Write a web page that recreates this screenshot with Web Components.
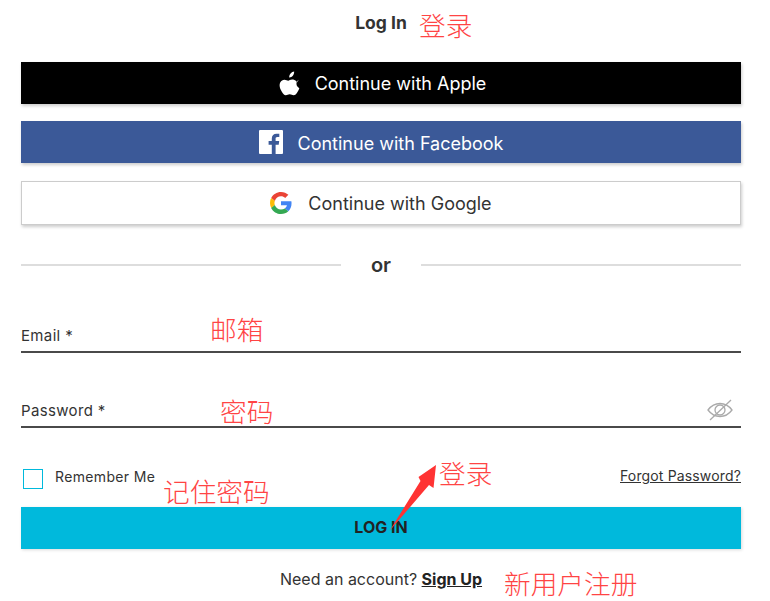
<!DOCTYPE html>
<html lang="en">
<head>
<meta charset="utf-8">
<title>Log In</title>
<style>
  html, body { margin: 0; background: #fff; }
  body { font-family: "Inter", "Liberation Sans", sans-serif; color: #333; }
</style>
</head>
<body>
<login-page>
  <social-button slot="social" kind="apple">Continue with Apple</social-button>
  <social-button slot="social" kind="facebook">Continue with Facebook</social-button>
  <social-button slot="social" kind="google">Continue with Google</social-button>
</login-page>

<script>
const ICONS = {
  apple: `<svg width="21" height="25" viewBox="1.500 0.500 19 22" preserveAspectRatio="none"><path fill="#fff" d="M15.200 1c.1 1.500-.4 2.700-1.200 3.700-.9 1-2 1.600-3.200 1.500-.2-1.300.4-2.600 1.200-3.500C12.900 1.700 14.100 1.100 15.200 1zM19.400 8.300c-1.300.8-2.100 2-2.100 3.500 0 1.700 1 3.100 2.600 3.800-.4 1.200-1 2.400-1.800 3.500-1 1.400-1.900 2.700-3.400 2.700-1.400 0-1.800-.9-3.500-.9-1.600 0-2.200.9-3.500.9-1.400.1-2.500-1.400-3.500-2.800C2.300 16.300 1.300 13 2.700 10.400c.8-1.400 2.200-2.300 3.700-2.300 1.400 0 2.600.9 3.400.9.800 0 2.200-1.100 3.800-1 .7 0 2.900.3 4.300 2.300z"/></svg>`,
  facebook: `<svg width="24" height="24" viewBox="0 0 24 24"><rect width="24" height="24" rx="1" fill="#fff"/><path fill="#3b5998" d="M16.600 24v-9.300h3.100l.5-3.600h-3.600V8.800c0-1 .3-1.800 1.800-1.800h1.900V3.800c-.3 0-1.500-.1-2.800-.1-2.800 0-4.700 1.700-4.700 4.800v2.600H9.600v3.600h3.200V24z"/></svg>`,
  google: `<svg width="22" height="22" viewBox="0 0 48 48"><path fill="#EA4335" d="M24 9.500c3.500 0 6.700 1.200 9.200 3.600l6.900-6.900C35.900 2.400 30.500 0 24 0 14.600 0 6.500 5.400 2.600 13.200l8 6.200C12.400 13.700 17.700 9.500 24 9.500z"/><path fill="#4285F4" d="M47 24.500c0-1.600-.1-3.100-.4-4.500H24v9h12.900c-.6 3-2.200 5.400-4.700 7.100l7.700 6C44.400 37.900 47 31.800 47 24.500z"/><path fill="#FBBC05" d="M10.500 28.600c-.5-1.400-.8-3-.8-4.600s.3-3.200.8-4.600l-8-6.200C.9 16.500 0 20.100 0 24s.9 7.500 2.600 10.800z"/><path fill="#34A853" d="M24 48c6.500 0 11.900-2.100 15.900-5.900l-7.700-6c-2.100 1.400-4.900 2.300-8.200 2.300-6.300 0-11.600-4.200-13.500-9.900l-8 6.200C6.500 42.600 14.600 48 24 48z"/></svg>`
};

class SocialButton extends HTMLElement {
  constructor() {
    super();
    this.attachShadow({ mode: 'open' });
    const kind = this.getAttribute('kind');
    this.shadowRoot.innerHTML = `
      <style>
        :host { display: block; }
        button {
          display: flex;
          align-items: center;
          justify-content: center;
          gap: 15px;
          width: 100%;
          height: 42px;
          padding: 0;
          border: none;
          font: 400 18px "Inter", "Liberation Sans", sans-serif;
          box-shadow: 1px 2px 3px rgba(0,0,0,.2);
        }
        svg { display: block; }
        .apple { background: #000; color: #fff; padding-left: 3px; }
        .facebook { background: #3b5998; color: #fff; }
        .facebook span { padding-top: 2px; }
        .google { background: #fff; color: #333; height: 44px; margin-top: 1px; gap: 16px; border: 1px solid #ccc; }
      </style>
      <button class="${kind}">${ICONS[kind]}<span><slot></slot></span></button>
    `;
  }
}

class TextField extends HTMLElement {
  constructor() {
    super();
    this.attachShadow({ mode: 'open' });
    this.shadowRoot.innerHTML = `
      <style>
        :host {
          display: flex;
          align-items: center;
          justify-content: space-between;
          height: 32px;
          border-bottom: 2px solid #4a4a4a;
          font-size: 15px;
          letter-spacing: .35px;
          color: #333;
        }
        svg { display: block; margin-right: 8px; }
      </style>
      <span><slot></slot></span>
      ${this.hasAttribute('eye') ? `<svg width="26" height="22" viewBox="0 0 26 22" fill="none" stroke="#aaa" stroke-width="1.300">
        <path d="M1 11c3-4 7.500-6.500 12-6.500S22 7 25 11c-3 4-7.500 6.500-12 6.500S4 15 1 11z"/>
        <circle cx="13" cy="11" r="5"/>
        <path d="M24 1 3 21"/></svg>` : ''}
    `;
  }
}

class NoteLabel extends HTMLElement {
  constructor() {
    super();
    this.attachShadow({ mode: 'open' });
    this.shadowRoot.innerHTML = `
      <style>
        :host {
          position: absolute;
          font: 300 26.700px/30px "Noto Sans CJK SC", sans-serif;
          color: #f44;
          white-space: nowrap;
        }
      </style>
      <slot></slot>
    `;
  }
}

class LoginPage extends HTMLElement {
  constructor() {
    super();
    this.attachShadow({ mode: 'open' });
    this.shadowRoot.innerHTML = `
      <style>
        :host {
          display: block;
          position: relative;
          width: 720px;
          height: 601px;
          padding: 0 29px 0 21px;
          overflow: hidden;
          color: #333;
        }
        h1 {
          margin: 0;
          height: 62px;
          padding-top: 13px;
          box-sizing: border-box;
          text-align: center;
          font-size: 17.500px;
          line-height: 20px;
          font-weight: 700;
        }
        .social { display: grid; gap: 17px; }
        .or {
          display: flex;
          align-items: center;
          gap: 30px;
          margin-top: 29px;
          height: 22px;
          font-size: 20px;
          font-weight: 600;
        }
        .or i { flex: 1; height: 1.500px; background: #ddd; }
        .fields { display: grid; gap: 41px; margin-top: 43px; }
        .row {
          display: flex;
          align-items: center;
          justify-content: space-between;
          margin-top: 41px;
          height: 20px;
          font-size: 14px;
          letter-spacing: .35px;
        }
        .remember { display: flex; align-items: center; gap: 12px; margin-left: 2px; }
        .remember span:last-child { padding-bottom: 5px; }
        .box { width: 18px; height: 18px; border: 1px solid #00b9dc; }
        .row a { color: #333; text-decoration: underline; padding-bottom: 8px; letter-spacing: .15px; }
        .login {
          display: block;
          width: 100%;
          height: 42px;
          margin-top: 18px;
          border: none;
          padding: 0 0 2px;
          background: #00b9dc;
          color: #222;
          font: 700 16px "Inter", "Liberation Sans", sans-serif;
          box-shadow: 1px 1px 3px rgba(0,0,0,.15);
        }
        .signup { margin-top: 20px; text-align: center; font-size: 16px; line-height: 20px; }
        .signup a { color: #222; font-weight: 700; text-decoration: underline; }
        .arrow { position: absolute; left: 385px; top: 460px; }
      </style>
      <h1>Log In</h1>
      <div class="social"><slot name="social"></slot></div>
      <div class="or"><i></i><span>or</span><i></i></div>
      <div class="fields">
        <text-field>Email *</text-field>
        <text-field eye>Password *</text-field>
      </div>
      <div class="row">
        <label class="remember"><span class="box"></span><span>Remember Me</span></label>
        <a href="#">Forgot Password?</a>
      </div>
      <button class="login">LOG IN</button>
      <div class="signup">Need an account? <a href="#">Sign Up</a></div>

      <note-label style="left:419px;top:10px">登录</note-label>
      <note-label style="left:210px;top:314px">邮箱</note-label>
      <note-label style="left:220px;top:396px">密码</note-label>
      <note-label style="left:163px;top:476px">记住密码</note-label>
      <note-label style="left:439px;top:458px">登录</note-label>
      <note-label style="left:504px;top:568px">新用户注册</note-label>
      <svg class="arrow" width="55" height="75" viewBox="385 460 55 75">
        <path fill="#f33" d="M389.500 531 420.500 481 418.500 477 436 465 433.500 488 429 485z"/>
      </svg>
    `;
  }
}

customElements.define('social-button', SocialButton);
customElements.define('text-field', TextField);
customElements.define('note-label', NoteLabel);
customElements.define('login-page', LoginPage);
</script>
</body>
</html>
